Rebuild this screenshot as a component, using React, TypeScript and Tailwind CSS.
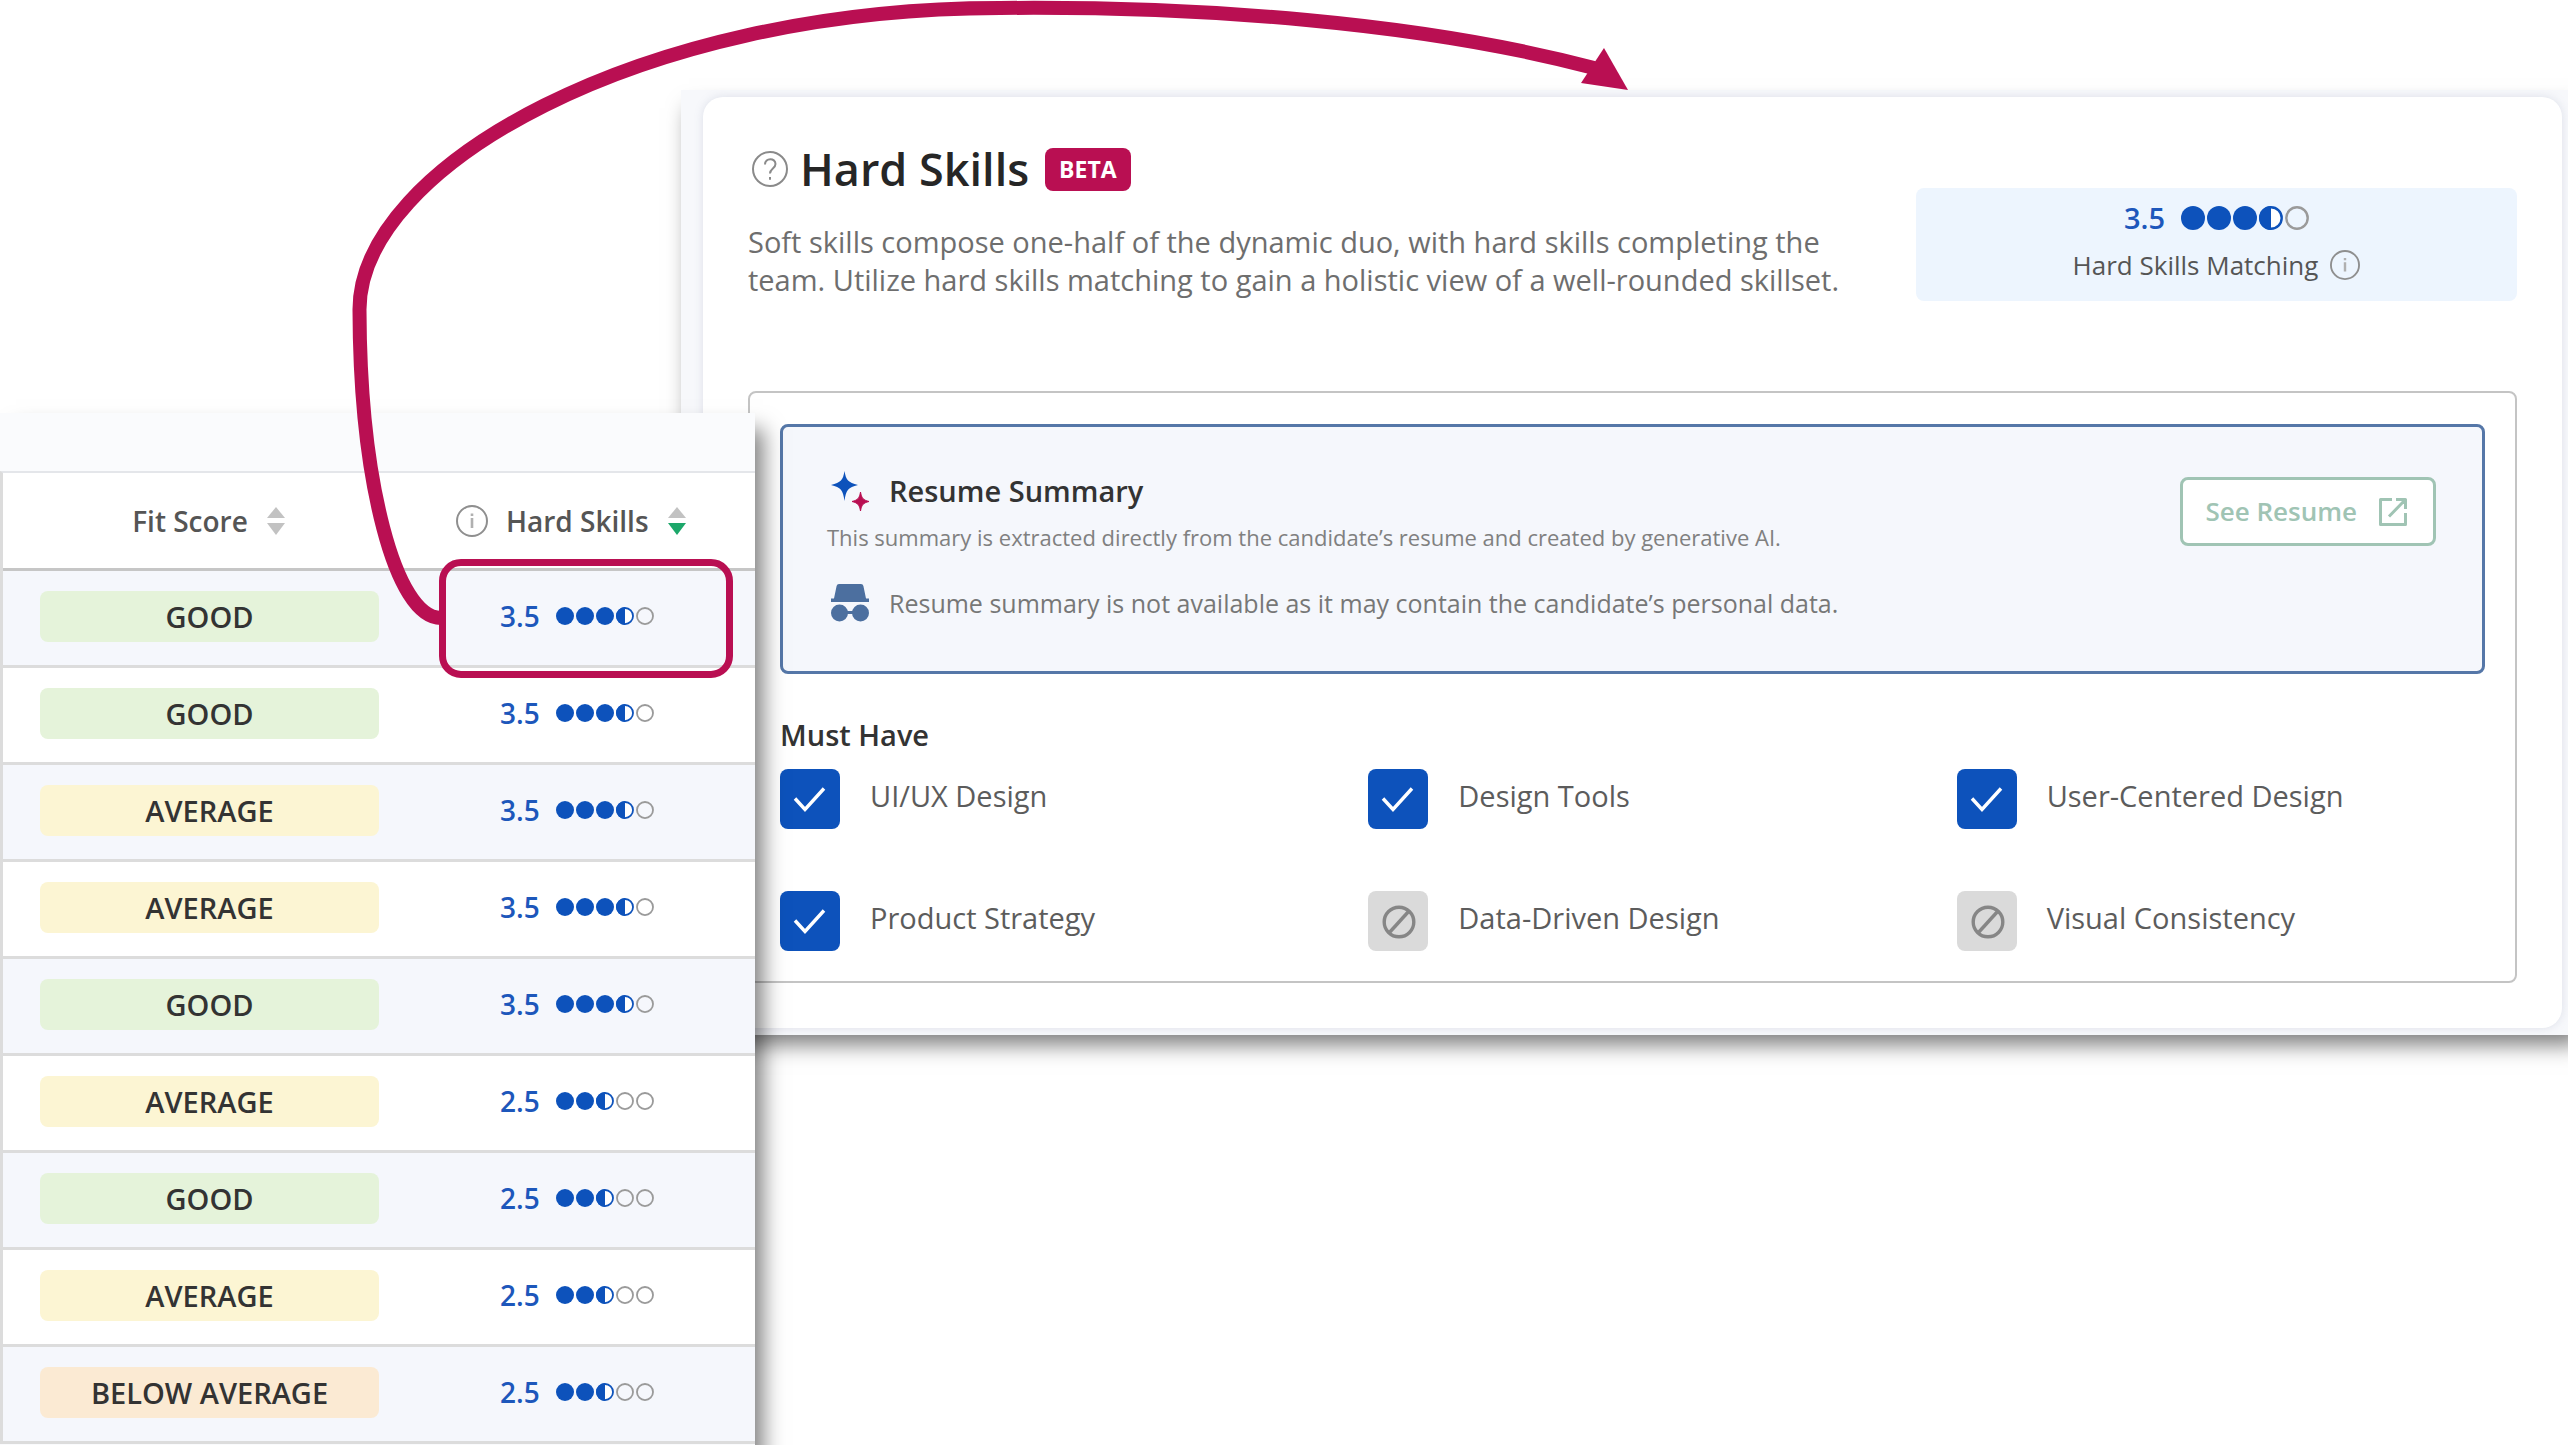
import { useState } from "react";

type Fit = "GOOD" | "AVERAGE" | "BELOW AVERAGE";

const rows: { fit: Fit; score: number }[] = [
  { fit: "GOOD", score: 3.5 },
  { fit: "GOOD", score: 3.5 },
  { fit: "AVERAGE", score: 3.5 },
  { fit: "AVERAGE", score: 3.5 },
  { fit: "GOOD", score: 3.5 },
  { fit: "AVERAGE", score: 2.5 },
  { fit: "GOOD", score: 2.5 },
  { fit: "AVERAGE", score: 2.5 },
  { fit: "BELOW AVERAGE", score: 2.5 },
];

const fitColors: Record<Fit, string> = {
  GOOD: "bg-[#e5f3da]",
  AVERAGE: "bg-[#fcf5d3]",
  "BELOW AVERAGE": "bg-[#fbead3]",
};

const skills = [
  { name: "UI/UX Design", matched: true },
  { name: "Design Tools", matched: true },
  { name: "User-Centered Design", matched: true },
  { name: "Product Strategy", matched: true },
  { name: "Data-Driven Design", matched: false },
  { name: "Visual Consistency", matched: false },
];

function Dots({ score, className }: { score: number; className: string }) {
  return (
    <span className="flex gap-0.5">
      {[0, 1, 2, 3, 4].map((i) => {
        const fill = score - i;
        return (
          <svg key={i} viewBox="0 0 24 24" className={className} aria-hidden="true">
            {fill >= 1 ? (
              <circle cx="12" cy="12" r="12" fill="#0d52bb" />
            ) : (
              <circle cx="12" cy="12" r="10.7" fill="#fff" fillOpacity={fill > 0 ? 1 : 0} stroke={fill > 0 ? "#0d52bb" : "#9a9a9a"} strokeWidth="2.4" />
            )}
            {fill > 0 && fill < 1 && <path d="M12 0a12 12 0 0 0 0 24z" fill="#0d52bb" />}
          </svg>
        );
      })}
    </span>
  );
}

function InfoIcon({ className }: { className: string }) {
  return (
    <svg viewBox="0 0 32 32" fill="none" stroke="#8f8f8f" strokeWidth="2" className={className} aria-hidden="true">
      <circle cx="16" cy="16" r="15" />
      <path d="M16 13v10M16 8.5v2.5" strokeWidth="2.6" stroke="#b0b0b0" />
    </svg>
  );
}

function SortIcon({ active }: { active?: boolean }) {
  return (
    <svg viewBox="0 0 20 28" className="h-7 w-5" aria-hidden="true">
      <path d="M10 0l9 11H1z" fill="#c2c2c2" />
      <path d="M10 28l9-12H1z" fill={active ? "#1ca76a" : "#c2c2c2"} />
    </svg>
  );
}

function SkillBox({ name, matched }: { name: string; matched: boolean }) {
  return (
    <label className="flex items-start gap-[30px] text-[29px] leading-[54px] text-[#5c5c5c]">
      <span className="grid size-[60px] shrink-0">
        <input
          type="checkbox"
          defaultChecked={matched}
          disabled={!matched}
          className="col-start-1 row-start-1 appearance-none rounded-lg bg-[#dadada] checked:bg-[#0d52bb]"
        />
        {matched ? (
          <svg viewBox="0 0 60 60" fill="none" stroke="#fff" strokeWidth="3.4" className="pointer-events-none col-start-1 row-start-1">
            <path d="M15 29.5l10 11 19-21" />
          </svg>
        ) : (
          <svg viewBox="0 0 60 60" fill="none" stroke="#868686" strokeWidth="3.4" className="pointer-events-none col-start-1 row-start-1">
            <circle cx="31" cy="31" r="14.8" />
            <path d="M21 42l20-22" />
          </svg>
        )}
      </span>
      <span>{name}</span>
    </label>
  );
}

function ResumeSummary() {
  return (
    <section className="flex items-start justify-between rounded-lg border-[3px] border-[#5577a8] bg-[#f5f7fc] pt-11 pr-[46px] pb-12 pl-11">
      <div>
        <h3 className="flex items-center gap-5 pl-1 text-[29px] leading-10 font-semibold text-[#333]">
          <svg viewBox="0 0 38 40" className="h-10 w-[38px]" aria-hidden="true">
            <path d="M13.500 0C15 9 17 11.500 27 14c-10 2.500-12 5-13.500 16C12 19 10 16.500 0 14 10 11.500 12 9 13.500 0z" fill="#0d52bb" />
            <path d="M29.500 21c1 6 2.500 8 8.500 9.500-6 1.500-7.500 3.500-8.500 9.500-1-6-2.500-8-8.500-9.500 6-1.500 7.500-3.500 8.500-9.500z" fill="#b90f52" stroke="#b90f52" />
          </svg>
          Resume Summary
        </h3>
        <p className="mt-2.5 text-[22px] leading-8 text-[#808080]">
          This summary is extracted directly from the candidate’s resume and created by generative AI.
        </p>
        <p className="mt-[30px] flex items-center gap-5 pl-1 text-[25px] leading-10 text-[#777]">
          <svg viewBox="0 0 38 38" className="size-[38px]" fill="#4c6f9f" aria-hidden="true">
            <path d="M8 0h22q2 0 2.400 2L35 14.500h3V18H0v-3.500h3L5.600 2Q6 0 8 0z" />
            <circle cx="8.500" cy="29" r="8.500" />
            <circle cx="29.500" cy="29" r="8.500" />
            <path d="M16 27h6v3h-6z" />
          </svg>
          Resume summary is not available as it may contain the candidate’s personal data.
        </p>
      </div>
      <button
        type="button"
        disabled
        className="mt-1.5 flex h-[69px] items-center gap-[22px] rounded-lg border-[3px] border-[#a0c4b4] bg-white pr-[26px] pl-[22px] text-[26px] font-semibold text-[#a0c4b4]"
      >
        See Resume
        <svg viewBox="0 0 28 28" fill="none" stroke="currentColor" strokeWidth="3" strokeLinejoin="round" className="size-7" aria-hidden="true">
          <path d="M13 1.500H1.500v25h25V15M17 1.500h9.500V11M26 2L10 18.500" />
        </svg>
      </button>
    </section>
  );
}

function HardSkillsPanel() {
  return (
    <main className="-mr-3 ml-[681px] bg-[#f7f8fb] pt-[7px] pr-[18px] pb-[7px] pl-[22px] shadow-[4px_14px_20px_-4px_rgba(0,0,0,0.5)]">
      <div className="rounded-[20px] bg-white px-[45px] pb-[45px] shadow-[0_0_10px_rgba(120,130,160,0.2)]">
        <header className="flex justify-between pt-11">
          <div>
            <h1 className="flex items-center gap-3 pt-1 pl-1 text-[45px] leading-[48px] font-semibold text-[#262626]">
              <svg viewBox="0 0 36 36" fill="none" stroke="#8a8a8a" strokeWidth="2" className="size-9" aria-hidden="true">
                <circle cx="18" cy="18" r="17" />
                <path d="M13 13.500c0-7 10.500-7 10.500-.5 0 4.500-5.500 4.500-5.500 9.500M18 26v2.800" />
              </svg>
              Hard Skills
              <span className="ml-1 flex h-[43px] items-center rounded-lg bg-[#b90f52] px-3.5 text-[23px] font-bold text-white">BETA</span>
            </h1>
            <p className="mt-[30px] max-w-[1120px] text-[29px] leading-[38px] text-[#6e6e6e]">
              Soft skills compose one-half of the dynamic duo, with hard skills completing the team. Utilize hard skills
              matching to gain a holistic view of a well-rounded skillset.
            </p>
          </div>
          <div className="mt-[47px] flex h-[113px] w-[601px] flex-col items-center rounded-lg bg-[#edf5fe] pt-2.5">
            <p className="flex items-center gap-4 text-[29px] leading-10 font-semibold text-[#1d57bb]">
              3.5
              <Dots score={3.5} className="size-6" />
            </p>
            <p className="mt-2 flex items-center gap-3 text-[26px] leading-[38px] text-[#555]">
              Hard Skills Matching
              <InfoIcon className="size-[30px]" />
            </p>
          </div>
        </header>

        <div className="mt-[90px] rounded-lg border-2 border-[#c4c4c4] px-[30px] pt-[31px] pb-[30px]">
          <ResumeSummary />
          <h2 className="mt-[42px] text-[29px] leading-[38px] font-semibold text-[#333]">Must Have</h2>
          <div className="mt-[15px] -mr-[60px] grid grid-cols-3 gap-y-[62px]">
            {skills.map((skill) => (
              <SkillBox key={skill.name} {...skill} />
            ))}
          </div>
        </div>
      </div>
    </main>
  );
}

function CandidateTable() {
  const [selected, setSelected] = useState(0);

  return (
    <aside className="absolute top-[413px] left-0 w-[755px] bg-[#fafbfd] pt-[58px] pb-4 shadow-[12px_12px_20px_-4px_rgba(0,0,0,0.5)]">
      <table className="w-full table-fixed border-separate border-spacing-0 border-t-2 border-l-[3px] border-t-[#e4e6ea] border-l-[#dcdcdc] bg-white">
        <thead>
          <tr className="h-[98px] text-[28px] text-[#555]">
            <th className="w-[412px] border-b-3 border-[#c6c6c6] p-0 font-semibold">
              <button type="button" className="mx-auto flex items-center gap-[18px]">
                Fit Score
                <SortIcon />
              </button>
            </th>
            <th className="border-b-3 border-[#c6c6c6] p-0 font-semibold">
              <button type="button" className="ml-[41px] flex items-center gap-[18px]">
                <InfoIcon className="size-8" />
                Hard Skills
                <SortIcon active />
              </button>
            </th>
          </tr>
        </thead>
        <tbody>
          {rows.map((row, i) => (
            <tr key={i} onClick={() => setSelected(i)} className="h-[97px] odd:bg-[#f5f7fc]">
              <td className="border-b-3 border-[#dcdcdc] p-0 pb-1 pl-[37px]">
                <span className={`block h-[51px] w-[339px] rounded-lg text-center text-[29px] leading-[51px] font-semibold text-[#333] ${fitColors[row.fit]}`}>
                  {row.fit}
                </span>
              </td>
              <td className="relative border-b-3 border-[#dcdcdc] p-0 pb-1 pl-[85px]">
                <span className="flex items-center gap-4 text-[28px] font-semibold text-[#1d57bb]">
                  {row.score}
                  <Dots score={row.score} className="size-[18px]" />
                </span>
                {i === selected && (
                  <span className="absolute -top-3 left-6 h-[119px] w-[294px] rounded-[22px] border-7 border-[#b90f52]" />
                )}
              </td>
            </tr>
          ))}
        </tbody>
      </table>
    </aside>
  );
}

export default function App() {
  return (
    <div className="relative min-h-screen overflow-hidden bg-white pt-[90px] font-['Open_Sans','Noto_Sans',sans-serif]">
      <HardSkillsPanel />
      <CandidateTable />

      {/* Callout arrow from the table cell to the panel */}
      <svg viewBox="0 0 1640 700" className="pointer-events-none absolute top-0 left-0 h-[700px] w-[1640px]" aria-hidden="true">
        <path
          d="M441 618C395 618 360 480 359.500 310C359 167 640 8 1000 8C1200 6 1420 22 1594 68"
          fill="none"
          stroke="#b90f52"
          strokeWidth="14"
        />
        <path d="M1628 90l-47-7 23-35z" fill="#b90f52" />
      </svg>
    </div>
  );
}
